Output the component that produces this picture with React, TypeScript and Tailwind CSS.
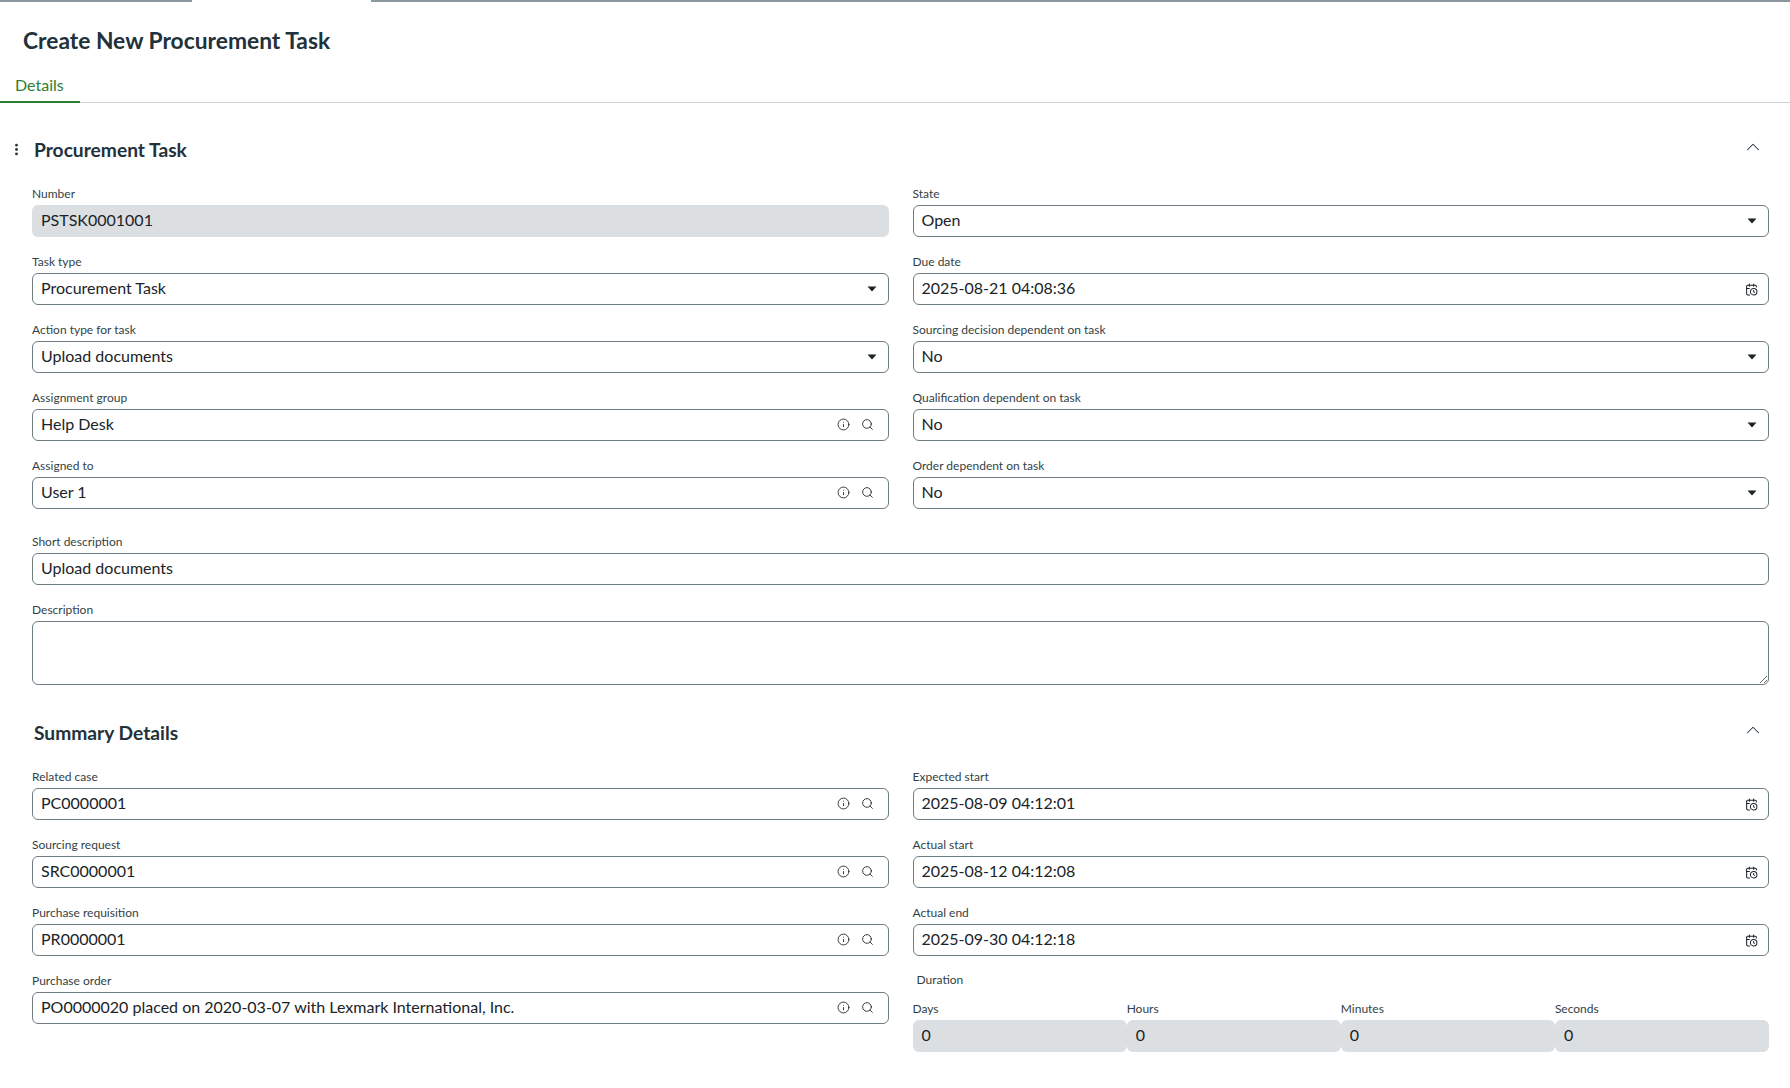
import { CalendarClock, ChevronUp, EllipsisVertical, Info, Search } from "lucide-react"
import type { ReactNode } from "react"

const BOX = "flex h-[32px] items-center rounded-[6px] border border-[#6e7c83] bg-white pl-[8px]"
const TEXT = "min-w-0 flex-1 bg-transparent pb-[2px] text-[16px] text-[#1a2327] outline-none"

function Field({ label, children }: { label: string; children: ReactNode }) {
  return (
    <div className="min-w-0">
      <label className="block h-[20px] text-[12px] leading-[18px] text-[#333f45]">{label}</label>
      {children}
    </div>
  )
}

function ReadOnly({ value }: { value: string }) {
  return (
    <div className="flex h-[32px] items-center rounded-[6px] bg-[#dcdfe2] pb-[2px] pl-[9px] text-[16px] text-[#1a2327]">
      {value}
    </div>
  )
}

function TextBox({ value }: { value: string }) {
  return (
    <div className={BOX}>
      <input readOnly value={value} className={TEXT} />
    </div>
  )
}

function Dropdown({ value }: { value: string }) {
  return (
    <div className={`${BOX} pr-[11px]`}>
      <span className={TEXT}>{value}</span>
      <svg width="10" height="6" viewBox="0 0 10 6" className="shrink-0">
        <path d="M0.5 0.5h9L5 5.5z" fill="#1a2327" />
      </svg>
    </div>
  )
}

function Reference({ value }: { value: string }) {
  return (
    <div className={`${BOX} pr-[14px]`}>
      <input readOnly value={value} className={TEXT} />
      <Info size={13} strokeWidth={1.6} className="mr-[11px] -mt-[1px] shrink-0 text-[#1a2327]" />
      <Search size={13} strokeWidth={1.6} className="-mt-[1px] shrink-0 text-[#1a2327]" />
    </div>
  )
}

function DateBox({ value }: { value: string }) {
  return (
    <div className={`${BOX} pr-[10px]`}>
      <input readOnly value={value} className={TEXT} />
      <CalendarClock size={13} strokeWidth={1.9} className="shrink-0 text-[#1a2327]" />
    </div>
  )
}

function SectionHeader({ title, menu, className }: { title: string; menu?: boolean; className: string }) {
  return (
    <div className={`flex h-[30px] items-center ${className}`}>
      <div className="flex w-[34px] shrink-0 justify-center pr-[2px] pb-[2px]">
        {menu && <EllipsisVertical size={15} strokeWidth={2.5} className="text-[#22313a]" />}
      </div>
      <h2 className="flex-1 text-[19.2px] font-bold text-[#22313a]">{title}</h2>
      <ChevronUp size={22} strokeWidth={1.1} className="mr-[26px] -mt-[6px] text-[#22313a]" />
    </div>
  )
}

export default function App() {
  return (
    <div className="min-h-screen bg-white font-['Lato',sans-serif]">
      <div className="flex h-[2px]">
        <div className="w-[192px] bg-[#8a979e]" />
        <div className="w-[179px]" />
        <div className="flex-1 bg-[#8a979e]" />
      </div>

      <h1 className="h-[70px] pl-[23px] pt-[20px] text-[22.8px] leading-[36px] font-bold text-[#22313a]">
        Create New Procurement Task
      </h1>

      <div className="h-[31px] border-b border-[#cfd4d6]">
        <div className="h-[31px] w-[80px] border-b-2 border-[#2e7d32] pl-[15px] pt-[1px] text-[16px] leading-[24px] text-[#2e7d32]">
          Details
        </div>
      </div>

      <SectionHeader title="Procurement Task" menu className="mt-[32px] mb-[20px]" />

      <div className="px-[21px] pl-[32px]">
        <div className="grid grid-cols-2 gap-x-[24px] gap-y-[16px]">
          <Field label="Number">
            <ReadOnly value="PSTSK0001001" />
          </Field>
          <Field label="State">
            <Dropdown value="Open" />
          </Field>
          <Field label="Task type">
            <Dropdown value="Procurement Task" />
          </Field>
          <Field label="Due date">
            <DateBox value="2025-08-21 04:08:36" />
          </Field>
          <Field label="Action type for task">
            <Dropdown value="Upload documents" />
          </Field>
          <Field label="Sourcing decision dependent on task">
            <Dropdown value="No" />
          </Field>
          <Field label="Assignment group">
            <Reference value="Help Desk" />
          </Field>
          <Field label="Qualification dependent on task">
            <Dropdown value="No" />
          </Field>
          <Field label="Assigned to">
            <Reference value="User 1" />
          </Field>
          <Field label="Order dependent on task">
            <Dropdown value="No" />
          </Field>
        </div>

        <div className="mt-[24px] flex flex-col gap-[16px]">
          <Field label="Short description">
            <TextBox value="Upload documents" />
          </Field>
          <Field label="Description">
            <textarea
              readOnly
              className="block h-[64px] w-full resize-y rounded-[6px] border border-[#6e7c83] bg-white outline-none"
            />
          </Field>
        </div>
      </div>

      <SectionHeader title="Summary Details" className="mt-[33px] mb-[20px]" />

      <div className="px-[21px] pl-[32px]">
        <div className="grid grid-cols-2 gap-x-[24px] gap-y-[16px]">
          <Field label="Related case">
            <Reference value="PC0000001" />
          </Field>
          <Field label="Expected start">
            <DateBox value="2025-08-09 04:12:01" />
          </Field>
          <Field label="Sourcing request">
            <Reference value="SRC0000001" />
          </Field>
          <Field label="Actual start">
            <DateBox value="2025-08-12 04:12:08" />
          </Field>
          <Field label="Purchase requisition">
            <Reference value="PR0000001" />
          </Field>
          <Field label="Actual end">
            <DateBox value="2025-09-30 04:12:18" />
          </Field>
          <Field label="Purchase order">
            <Reference value="PO0000020 placed on 2020-03-07 with Lexmark International, Inc." />
          </Field>
          <div>
            <div className="mb-[12px] h-[16px] pl-[4px] text-[12px] leading-[16px] text-[#333f45]">Duration</div>
            <div className="grid grid-cols-4">
              <Field label="Days">
                <ReadOnly value="0" />
              </Field>
              <Field label="Hours">
                <ReadOnly value="0" />
              </Field>
              <Field label="Minutes">
                <ReadOnly value="0" />
              </Field>
              <Field label="Seconds">
                <ReadOnly value="0" />
              </Field>
            </div>
          </div>
        </div>
      </div>
    </div>
  )
}
